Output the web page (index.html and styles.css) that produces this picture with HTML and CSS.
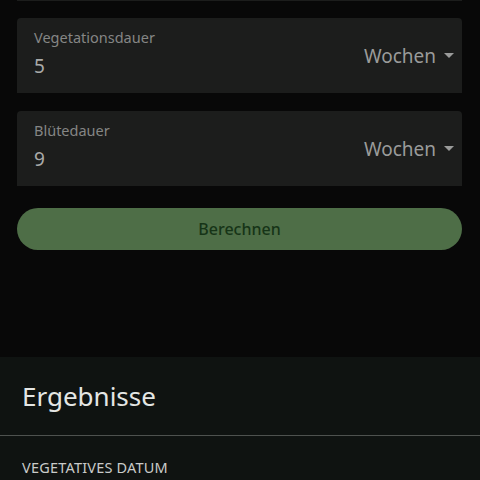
FILE: index.html
```html
<!doctype html>
<html>
<head>
<meta charset="utf-8">
<title>Rechner</title>
<link rel="stylesheet" href="styles.css">
</head>
<body>
<div class="form">
	<div class="field field_hidden"></div>
	<div class="field">
		<div class="field_text">
			<span class="field_label">Vegetationsdauer</span>
			<span class="field_value">5</span>
		</div>
		<div class="unit">Wochen <span class="caret"></span></div>
	</div>
	<div class="field">
		<div class="field_text">
			<span class="field_label">Blütedauer</span>
			<span class="field_value">9</span>
		</div>
		<div class="unit">Wochen <span class="caret"></span></div>
	</div>
	<button class="calc">Berechnen</button>
</div>
<div class="results">
	<h2 class="results_title">Ergebnisse</h2>
	<div class="results_row">
		<div class="results_label">VEGETATIVES DATUM</div>
	</div>
</div>
</body>
</html>
```

FILE: styles.css
```css
body {margin: 0; padding: 0; background: #080808; font-family: "Noto Sans", sans-serif;}
.form {display: flex; flex-direction: column; gap: 18px; padding: 0 18px 0 17px;}
.field {display: flex; align-items: center; justify-content: space-between; height: 75px; box-sizing: border-box; padding: 0 8px 0 17px; background: #1c1d1c; border-radius: 4px 4px 0 0;}
.field_hidden {margin-top: -74px; height: 75px; margin-bottom: -1px;}
.field_text {display: flex; flex-direction: column; gap: 6px; margin-top: -6px;}
.field_label {font-size: 14.5px; color: #858685;}
.field_value {font-size: 19px; color: #a9aaa9;}
.unit {display: flex; align-items: center; gap: 8px; font-size: 19px; color: #9a9b9a; margin-top: 0;}
.caret {width: 0; height: 0; border-left: 5px solid transparent; border-right: 5px solid transparent; border-top: 5px solid #9a9b9a;}
.calc {margin-top: 4px; height: 42px; border: 0; border-radius: 21px; background: #4e6e47; color: #163417; font-family: inherit; font-size: 16px; font-weight: 500;}
.results {margin-top: 107px; background: #0f1311;}
.results_title {margin: 0; padding: 20px 22px; height: 38px; line-height: 38px; font-size: 26px; font-weight: normal; color: #e4e6e4; border-bottom: 1px solid #4e524f;}
.results_row {padding: 21px 22px;}
.results_label {font-size: 14.5px; color: #c9cbc9; letter-spacing: 0.2px;}
```
